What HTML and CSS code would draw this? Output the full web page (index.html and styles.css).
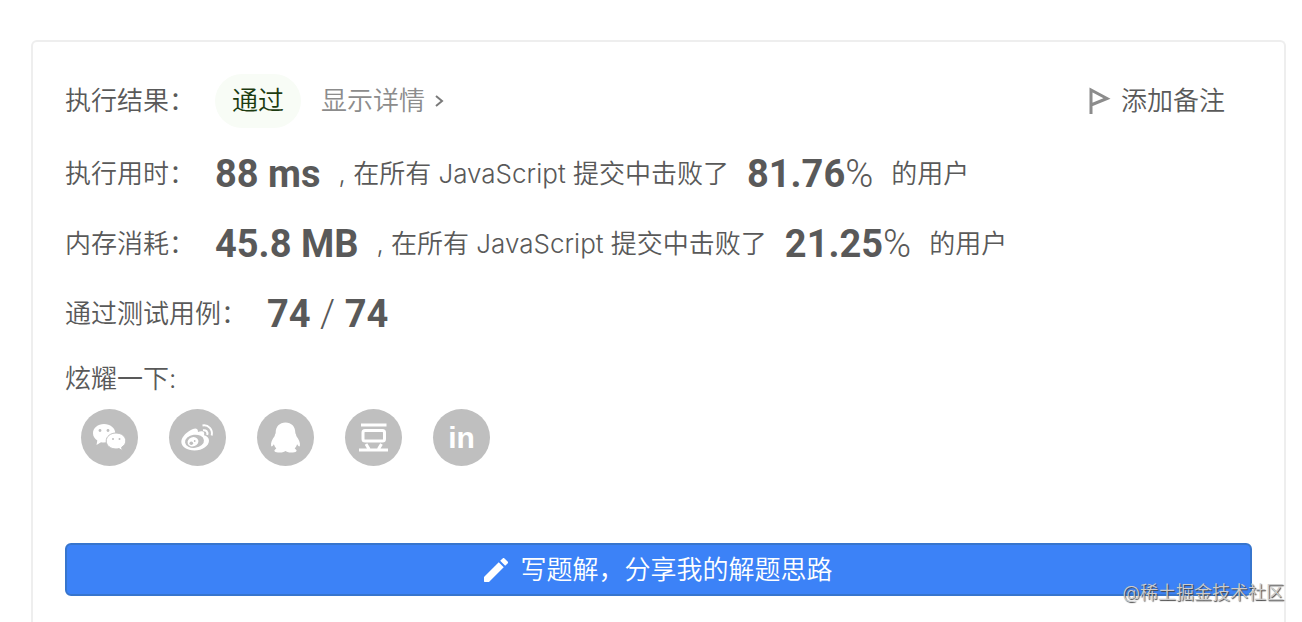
FILE: index.html
```html
<!DOCTYPE html>
<html lang="zh-CN">
  <head>
    <meta charset="utf-8" />
    <meta name="viewport" content="width=device-width, initial-scale=1" />
    <title>执行结果</title>
    <link rel="stylesheet" href="styles.css">
  </head>
  <body>
    <main class="card">
      <div class="row first">
        <span class="label">执行结果：</span>
        <span class="status">通过</span>
        <a class="detail" href="#detail">
          显示详情
          <svg width="9" height="14" viewBox="0 0 9 14"><path d="M1 2l6 5-6 5" /></svg>
        </a>
        <button class="note" type="button">
          <svg width="22" height="28" viewBox="0 0 22 28"><path d="M2 27V3l16 8.500L2 18" /></svg>
          添加备注
        </button>
      </div>
      <div class="row">
        <span class="label">执行用时：</span>
        <span class="num">88 ms</span>
        <span>, 在所有 JavaScript 提交中击败了</span>
        <span class="num">81.76<span class="thin">%</span></span>
        <span>的用户</span>
      </div>
      <div class="row">
        <span class="label">内存消耗：</span>
        <span class="num">45.8 MB</span>
        <span>, 在所有 JavaScript 提交中击败了</span>
        <span class="num">21.25<span class="thin">%</span></span>
        <span>的用户</span>
      </div>
      <div class="row">
        <span class="label">通过测试用例：</span>
        <span class="num">74 <span class="thin">/</span> 74</span>
      </div>
      <p class="share-title">炫耀一下:</p>
      <div class="share">
        <a href="#wechat" aria-label="微信">
          <svg viewBox="0 0 57 57">
            <path class="fill" d="M23 15c-6.200 0-11 4-11 9.200 0 3 1.600 5.500 4.300 7.300l-.8 4.500 4.500-2.800c1 .2 2 .3 3 .3 6.200 0 11.300-4.200 11.300-9.300S29.200 15 23 15z" />
            <path class="fill ring" d="M35 24c-5.500 0-9.800 3.500-9.800 8s4.300 8 9.800 8c1 0 2-.1 3-.4l3.300 2-.7-3.300c2.500-1.500 4.200-3.700 4.200-6.300 0-4.500-4.300-8-9.800-8z" />
            <g class="gray"><circle cx="19" cy="21.500" r="1.400" /><circle cx="27" cy="21.500" r="1.400" /><circle cx="32" cy="30" r="1" /><circle cx="38.500" cy="30" r="1" /></g>
          </svg>
        </a>
        <a href="#weibo" aria-label="微博">
          <svg viewBox="0 0 57 57">
            <path class="fill" d="M24 20c2.500-1.200 5.200-.6 5 3 3.500-1.400 7.300-1 6 3.300 3 .8 5 2.600 5 5.400 0 5-6.600 9.800-14.500 9.800-7.400 0-13.200-3.500-13.200-8.700C12.300 28 18.500 22 24 20z" />
            <ellipse class="gray" cx="25.500" cy="32.300" rx="9.500" ry="6.600" transform="rotate(-7 25.500 32.300)" />
            <ellipse class="fill" cx="24" cy="32.800" rx="5.500" ry="4.600" transform="rotate(-20 24 32.800)" />
            <g class="gray"><circle cx="22.300" cy="34.300" r="1.800" /><circle cx="25.700" cy="32" r=".9" /></g>
            <path class="arc" d="M33.500 16.500c6-1 10.500 4 9.200 10M34 21.300c3.200-.5 5 1.600 4.200 4.600" />
          </svg>
        </a>
        <a href="#qq" aria-label="QQ">
          <svg viewBox="0 0 57 57">
            <path class="fill" d="M28.500 13.500c-6 0-9.800 4.200-9.800 10 0 1.400-1 1.700-1 3.500-2.500 3.300-4.200 7-3.600 9.700.4 1.500 1.700.3 2.800-1.400.4 1.600 1.200 3 2.400 4.200-4 2.500-1.200 4 3.400 4 3 0 5-.6 5.800-1.500.8.900 2.800 1.500 5.800 1.500 4.600 0 7.400-1.500 3.400-4 1.200-1.200 2-2.600 2.400-4.200 1.100 1.700 2.400 2.900 2.800 1.400.6-2.700-1.100-6.400-3.600-9.700 0-1.800-1-2.100-1-3.500 0-5.800-3.800-10-9.800-10z" />
          </svg>
        </a>
        <a href="#douban" aria-label="豆瓣">
          <svg viewBox="0 0 57 57">
            <path class="line" d="M16 16h25.500M14 41h29M21 35l3 5M36.500 35l-3 5" />
            <rect class="line" x="18" y="21.500" width="21.500" height="10.500" rx="2" />
          </svg>
        </a>
        <a class="linkedin" href="#linkedin" aria-label="LinkedIn">in</a>
      </div>
      <button class="write" type="button">
        <svg width="24" height="24" viewBox="3 3 18 18"><path d="M3 17.250V20.500q0 .5.5.5h3.250L17.810 9.940l-3.750-3.750L3 17.250zM20.710 7.040a1 1 0 0 0 0-1.410l-2.340-2.340a1 1 0 0 0-1.410 0l-1.830 1.830 3.750 3.750 1.830-1.830z" /></svg>
        写题解，分享我的解题思路
      </button>
    </main>
    <div class="watermark">@稀土掘金技术社区</div>
  </body>
</html>
```
FILE: styles.css
```css
* {
  box-sizing: border-box;
}
body {
  margin: 0;
  padding: 40px 16px 0 31px;
  background-color: #fff;
  color: #595959;
  font-family: Inter, "Noto Sans CJK SC", sans-serif;
  font-size: 26px;
  font-weight: 350;
  line-height: 40px;
}
button {
  font: inherit;
  cursor: pointer;
}
a {
  text-decoration: none;
}
svg {
  fill: none;
}
.card {
  min-height: calc(100vh - 40px);
  padding: 32px 32px 24px;
  border: 2px solid #eee;
  border-bottom: none;
  border-radius: 6px 6px 0 0;
}
.row {
  display: flex;
  align-items: center;
  height: 70px;
  white-space: nowrap;
}
.first {
  height: 54px;
  margin-bottom: 11px;
}
.label {
  margin-right: 20px;
}
.status {
  padding: 7px 17px;
  border-radius: 27px;
  background-color: #f8fcf6;
  color: #1c3b10;
}
.detail {
  display: flex;
  align-items: center;
  gap: 10px;
  margin-left: 20px;
  color: #8c8c8c;
}
.detail svg {
  stroke: #7a7a7a;
  stroke-width: 2;
}
.note {
  display: flex;
  align-items: center;
  gap: 10px;
  margin-left: auto;
  padding: 0 27px 0 0;
  border: none;
  background: none;
  color: #595959;
}
.note svg {
  stroke: #8c8c8c;
  stroke-width: 3;
}
.num {
  margin-right: 18px;
  font-family: Roboto, sans-serif;
  font-size: 38px;
  font-weight: 700;
}
.row span + .num {
  margin-left: 18px;
}
.row .label + .num {
  margin-left: 0;
}
.thin {
  font-weight: 300;
}
.share-title {
  margin: 10px 0;
}
.share {
  display: flex;
  gap: 31px;
  padding-left: 16px;
}
.share a {
  width: 57px;
  height: 57px;
  border-radius: 50%;
  background-color: #bfbfbf;
}
.share svg {
  display: block;
}
.fill {
  fill: #fff;
}
.ring {
  stroke: #bfbfbf;
  stroke-width: 1;
}
.gray {
  fill: #bfbfbf;
}
.arc {
  stroke: #fff;
  stroke-width: 2;
}
.line {
  stroke: #fff;
  stroke-width: 3;
}
.share .linkedin {
  color: #fff;
  font-family: "Liberation Sans", sans-serif;
  font-size: 30px;
  font-weight: 700;
  line-height: 57px;
  text-align: center;
}
.write {
  display: flex;
  align-items: center;
  justify-content: center;
  gap: 12px;
  width: 100%;
  height: 53px;
  margin-top: 77px;
  border: 2px solid #3775cd;
  border-radius: 6px;
  background-color: #3c82f7;
  color: #fff;
}
.write svg {
  fill: #fff;
}
.watermark {
  position: absolute;
  right: 18px;
  bottom: 16px;
  color: #ccc;
  font-size: 18px;
  line-height: 26px;
  text-shadow: 1px 1px 1px #444;
}
```
